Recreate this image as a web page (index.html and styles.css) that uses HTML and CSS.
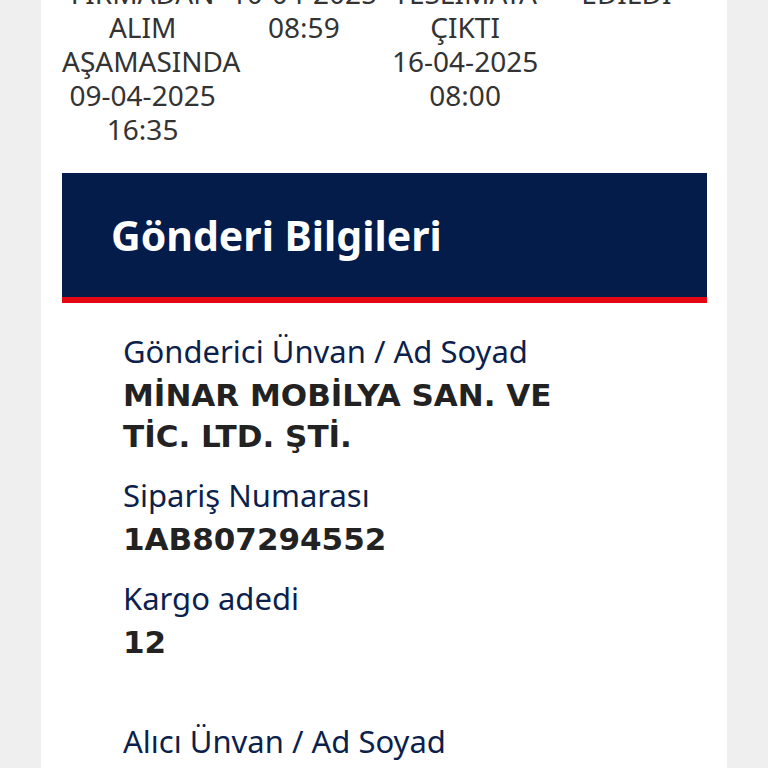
FILE: index.html
```html
<!DOCTYPE html>
<html lang="tr">
<head>
<meta charset="utf-8">
<link rel="stylesheet" href="styles.css">
</head>
<body>
<div class="card">
  <div class="timeline">
    <div class="step">FİRMADAN<br>ALIM<br>AŞAMASINDA<br>09-04-2025<br>16:35</div>
    <div class="step">10-04-2025<br>08:59</div>
    <div class="step">TESLİMATA<br>ÇIKTI<br>16-04-2025<br>08:00</div>
    <div class="step">EDİLDİ</div>
  </div>
  <div class="section-head">
    <h2 class="section-title">Gönderi Bilgileri</h2>
  </div>
  <div class="details">
    <div class="field">
      <div class="label">Gönderici Ünvan / Ad Soyad</div>
      <div class="value">MİNAR MOBİLYA SAN. VE<br>TİC. LTD. ŞTİ.</div>
    </div>
    <div class="field">
      <div class="label">Sipariş Numarası</div>
      <div class="value">1AB807294552</div>
    </div>
    <div class="field">
      <div class="label">Kargo adedi</div>
      <div class="value">12</div>
    </div>
    <div class="field field-gap">
      <div class="label">Alıcı Ünvan / Ad Soyad</div>
    </div>
  </div>
</div>
</body>
</html>
```
FILE: styles.css
```css
html, body {
  margin: 0;
  padding: 0;
  background: #efefef;
  height: 100%;
  overflow: hidden;
}
body {
  font-family: "Noto Sans", "Open Sans", sans-serif;
}
.card {
  display: flow-root;
  margin-left: 41px;
  width: 686px;
  height: 100vh;
  overflow: hidden;
  box-sizing: border-box;
  padding: 0 20px 0 21px;
  background: #ffffff;
}
.timeline {
  display: grid;
  grid-template-columns: repeat(4, minmax(0, 1fr));
  margin-top: -24px;
  font-size: 28px;
  line-height: 34px;
  color: #333333;
  text-align: center;
  align-items: start;
}
.step {
  white-space: nowrap;
}
.section-head {
  margin-top: 27px;
  height: 124px;
  background: #041c4a;
  border-bottom: 6px solid #e30613;
  display: flex;
  align-items: center;
  padding-left: 49px;
}
.section-title {
  margin: 0;
  color: #ffffff;
  font-size: 41px;
  font-weight: 700;
  line-height: 44px;
}
.details {
  padding: 30px 0 0 61px;
}
.field {
  margin-bottom: 20px;
}
.field-gap {
  margin-top: 60px;
}
.label {
  color: #0c1f4d;
  font-size: 31px;
  line-height: 36px;
}
.value {
  margin-top: 6px;
  color: #222222;
  font-family: "DejaVu Sans", "Noto Sans", sans-serif;
  font-size: 31px;
  font-weight: 700;
  line-height: 41px;
}
```
